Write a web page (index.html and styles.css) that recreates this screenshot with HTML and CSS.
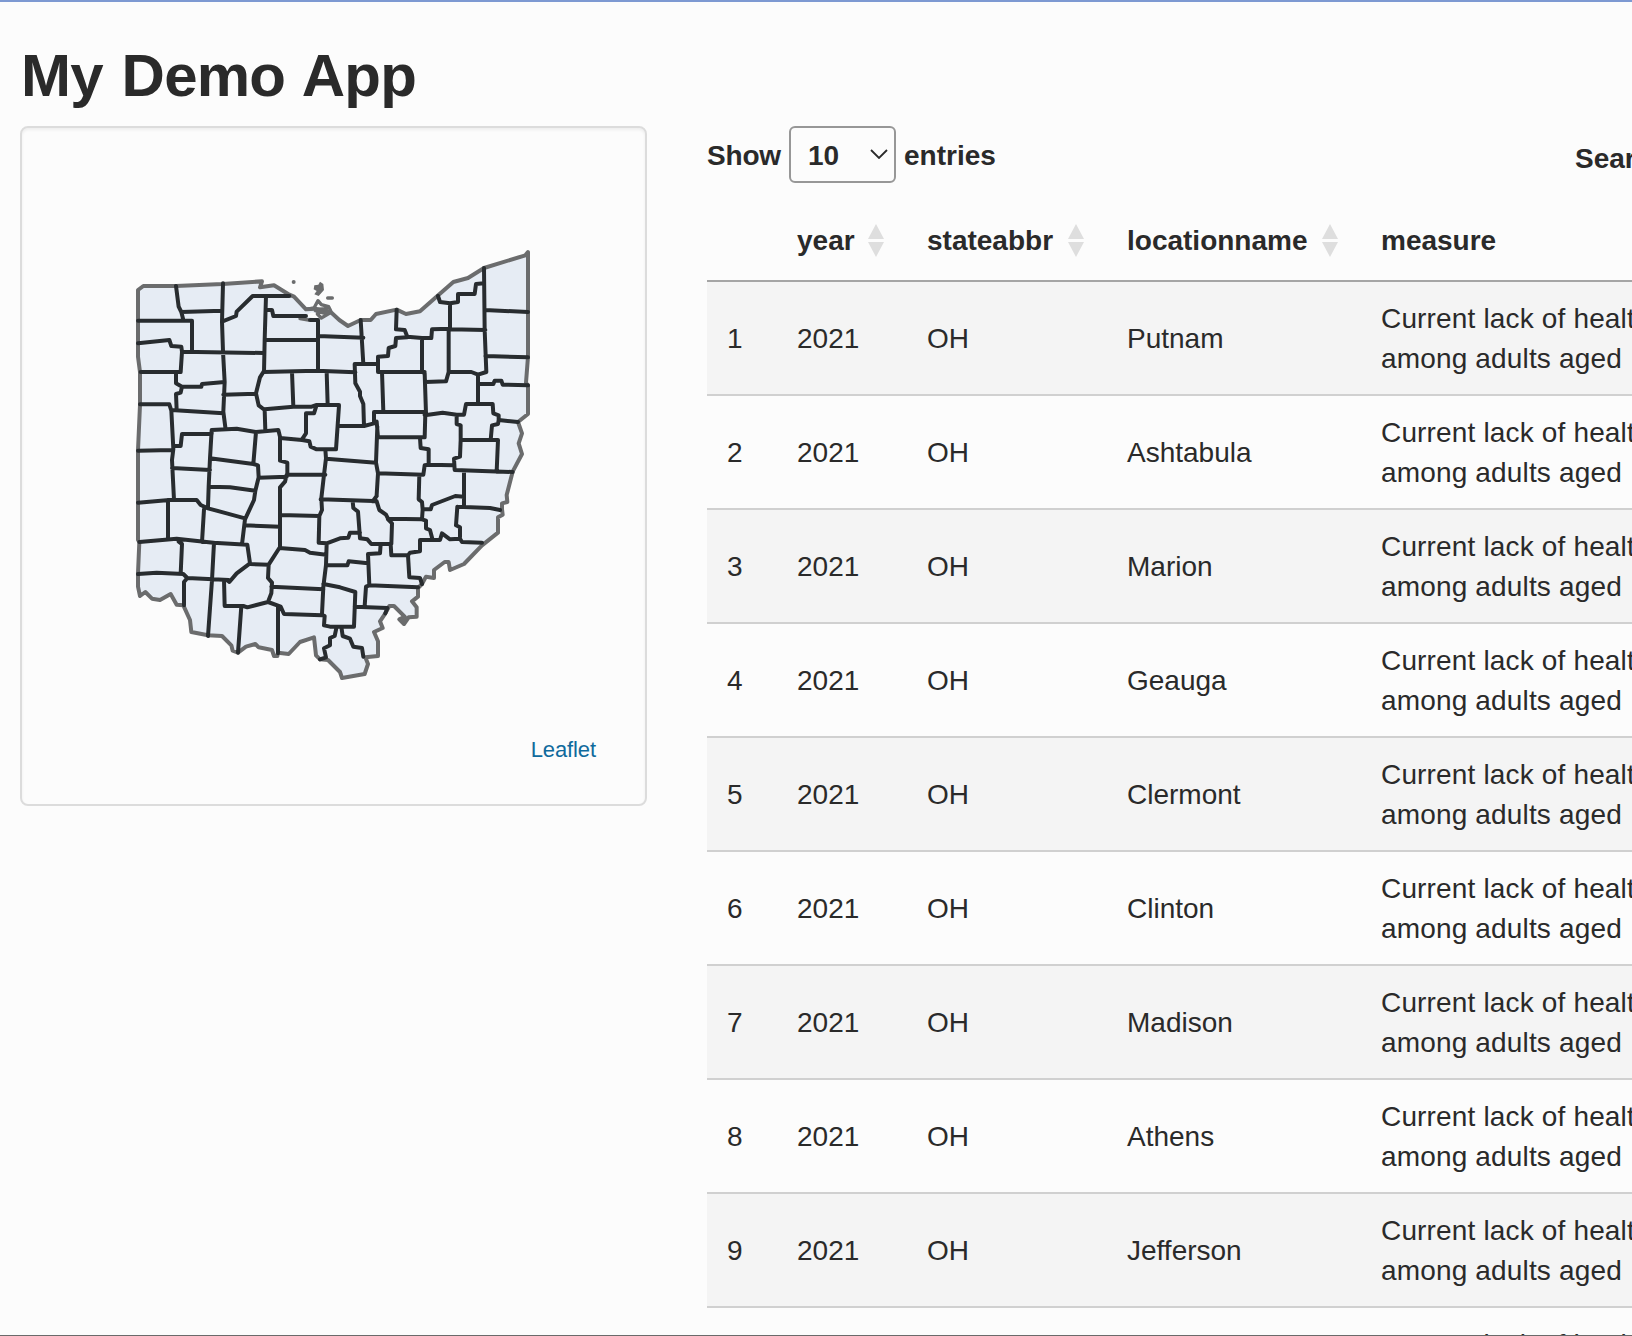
FILE: index.html
```
<!DOCTYPE html>
<html lang="en">
<head>
<meta charset="utf-8">
<title>My Demo App</title>
<link rel="stylesheet" href="styles.css">
</head>
<body>
<div class="app">
  <h2 class="title">My Demo App</h2>
  <div class="layout">
    <aside class="well">
      <svg class="map" viewBox="0 0 1230 1320" role="img" aria-label="Ohio counties">
        <path class="state" d="M24 150L40 138H138L278 132L396 124L390 142L432 136L478 164L492 170L528 208L556 206L590 214L602 216L628 240L654 258L692 240H722L738 222L800 209L828 222L870 214L922 168L970 126L1014 114L1062 84L1186 46L1194 36V350L1188 428L1194 436V522L1164 546L1176 580L1166 610L1176 642L1148 695L1130 765L1132 786L1116 790V808L1118 824L1104 832V878L1056 916L1002 972L960 990L956 966H944L912 990V1014L888 1010L876 1032L864 1044V1070L846 1084L860 1102V1130L836 1132L822 1152L808 1138L824 1130L792 1098H778L766 1120L750 1144L758 1164L732 1176L744 1204V1248L706 1252L714 1272L704 1302L636 1314L630 1296L594 1260L570 1258L558 1246L552 1192L510 1206L476 1242L444 1238L442 1248H432L426 1230L386 1222L376 1212L348 1220L324 1238L308 1232L304 1216L276 1188L234 1186L184 1176L180 1140L160 1096L140 1094L122 1062L90 1080L66 1076L46 1056L30 1068L24 1040V1000L28 906L24 900V630L30 495V396L24 350Z"/>
        <path class="bay" d="M524 228L545 217L566 222L590 220L570 230L560 236L540 232Z"/>
        <path class="shore" d="M528 208L552 204L564 182L574 194L596 200L602 212L584 220L556 212M510 236L536 240M562 222L574 234L602 218M556 208L590 206"/>
        <g class="island">
          <circle cx="491" cy="126" r="6"/>
          <path d="M570 125L580 132L582 150L566 168L553 163L560 153L551 148L553 136L565 134Z"/>
          <rect x="588" y="169" width="24" height="10" rx="5"/>
          <path d="M806 1138L822 1126L838 1134L822 1154Z"/>
        </g>
        <path class="county" d="M138 138L146 200L154 216L160 240M154 216L276 212M279 130L276 245L279 335L284 426L280 515L286 562M24 242H186V335M24 310L118 300L124 318L154 320L156 335L152 396H32M156 335L400 339M276 245L318 228L320 215L368 168H478M408 168L404 300L402 396M408 210H426L430 228H528M404 300H564M540 240H564V393M564 288L700 293M400 396L560 392L676 397M400 396L390 412L378 460L386 496L404 510L406 572M486 396L490 500M590 396L593 495M138 396V430L156 440H214L216 432L284 426M156 440L152 458L138 462L140 510M30 493H118L124 512L130 627L126 660L132 780M124 510L280 520M280 464L378 461M404 508L490 500H545L560 495H627M560 495L552 520H528V580L516 598M450 594L516 600L538 604L542 620L560 628H618L622 570L627 497M245 570L320 566L378 576L445 570L450 590V662L472 668V704M245 570V582H156L152 618H130M24 632L126 630M378 576L370 672M245 570L240 655L236 740L234 800M126 684L240 690M240 655L370 672L384 676L386 712L376 752L372 780L345 838L336 913M386 713L470 710M474 704H586M470 704L465 725L450 742V920M236 740L300 742L376 752M24 788L118 780H200L212 795L234 805L290 820L345 835M222 808L216 906M114 780V896M345 856L450 860M450 825L568 828M586 628L588 655L582 704L574 775L576 810L568 828L566 908M588 656L738 668M572 778L730 783L740 768M692 240L700 372M740 372H674L676 430L690 455V468L700 492L702 558M800 209L798 268L824 270L832 290L876 294H904L906 268L960 266M832 292L798 294L796 318L776 324L774 348L744 350V396H884M756 396L760 515M876 294V396L884 400L888 520M886 426L948 424L956 396V266M960 190V268L1066 270M924 168L930 186L960 190L984 186V162H1034L1038 132L1062 130M1062 84L1064 270L1069 396L1044 404L1024 396H956M1064 210L1194 216M1066 348L1194 352M1044 404V492M1044 432H1090L1094 422H1114L1118 434L1194 436M624 558H702L732 550V516H884V526L938 518L980 524H1002L1008 492H1088L1090 520L1106 526V540L1164 546M1106 540L1104 552L1086 556L1082 600M980 524V552L992 556V600H1104L1100 695M992 600L990 650L972 656L974 690L1148 696M732 550L740 545L744 592H884L886 520M870 594L872 624L896 628V674L970 676M896 674L884 676L880 704L744 700M742 560L738 668L744 700L740 765M868 704L866 778L876 786L878 808L876 838M878 808H902L906 795L976 768L1002 770M1002 695V798M982 800L1080 804L1110 810M982 800L978 856L990 862V892M740 784L748 810L768 824L774 836L876 838L888 842M668 784L670 804L684 815L690 895M740 768L728 784L740 784M566 908L590 910L630 895L655 893L660 878H690M690 895L712 898L724 912H784L786 850L774 838M782 912L784 946H834L840 938L870 934V900H908L900 870L888 865V842M908 900H930L936 880L960 898L990 896L996 906L1056 908M834 946L838 1012L870 1014L876 1032M752 912L750 940L714 942L718 1036M590 910L588 975L580 1040L576 1122M588 976H652L656 964L714 970M718 1036L864 1042M718 1036L708 1040L704 1098M674 1100L772 1104L766 1120M580 1032L630 1042L676 1056L672 1160H600L582 1156L584 1128L576 1124M28 906L140 896L250 908L352 914L360 970L320 1000L298 1026L290 1020M146 905L156 912L152 1002M24 1002L80 998L160 1002L172 1014L296 1020M172 1014L162 1026V1096M252 908L246 1020L234 1188M282 1020L284 1098H340L352 1102L414 1086L424 1060L426 1028L414 1014L416 974L360 972M416 974L448 924L525 930L540 938L588 944M424 1040L580 1048M414 1086L452 1100L462 1122L576 1126M444 1100V1240M334 1098L324 1238M620 1160L614 1188L600 1194V1216L582 1225L588 1252L570 1258M634 1160L638 1188L660 1196L670 1220L696 1224L700 1250"/>
      </svg>
      <a class="credit">Leaflet</a>
    </aside>
    <main class="data">
      <div class="controls">
        <div class="length">
          <span>Show</span>
          <span class="select">10<svg class="chevron" viewBox="0 0 18 10"><path d="M1 1L9 9L17 1"/></svg></span>
          <span>entries</span>
        </div>
        <div class="search">Search:</div>
      </div>
      <table class="table">
        <colgroup><col class="c-num"><col class="c-year"><col class="c-state"><col class="c-loc"><col class="c-measure"></colgroup>
        <thead>
          <tr>
            <th></th>
            <th><div class="head">year<svg class="sort" viewBox="0 0 16 33"><path d="M8 0L16 15H0ZM0 18H16L8 33Z"/></svg></div></th>
            <th><div class="head">stateabbr<svg class="sort" viewBox="0 0 16 33"><path d="M8 0L16 15H0ZM0 18H16L8 33Z"/></svg></div></th>
            <th><div class="head">locationname<svg class="sort" viewBox="0 0 16 33"><path d="M8 0L16 15H0ZM0 18H16L8 33Z"/></svg></div></th>
            <th><div class="head">measure</div></th>
          </tr>
        </thead>
        <tbody>
          <tr><td>1</td><td>2021</td><td>OH</td><td>Putnam</td><td>Current lack of health insurance<br>among adults aged</td></tr>
          <tr><td>2</td><td>2021</td><td>OH</td><td>Ashtabula</td><td>Current lack of health insurance<br>among adults aged</td></tr>
          <tr><td>3</td><td>2021</td><td>OH</td><td>Marion</td><td>Current lack of health insurance<br>among adults aged</td></tr>
          <tr><td>4</td><td>2021</td><td>OH</td><td>Geauga</td><td>Current lack of health insurance<br>among adults aged</td></tr>
          <tr><td>5</td><td>2021</td><td>OH</td><td>Clermont</td><td>Current lack of health insurance<br>among adults aged</td></tr>
          <tr><td>6</td><td>2021</td><td>OH</td><td>Clinton</td><td>Current lack of health insurance<br>among adults aged</td></tr>
          <tr><td>7</td><td>2021</td><td>OH</td><td>Madison</td><td>Current lack of health insurance<br>among adults aged</td></tr>
          <tr><td>8</td><td>2021</td><td>OH</td><td>Athens</td><td>Current lack of health insurance<br>among adults aged</td></tr>
          <tr><td>9</td><td>2021</td><td>OH</td><td>Jefferson</td><td>Current lack of health insurance<br>among adults aged</td></tr>
          <tr><td></td><td></td><td></td><td></td><td>Current lack of health insurance<br>among adults aged</td></tr>
        </tbody>
      </table>
    </main>
  </div>
</div>
</body>
</html>
```
FILE: styles.css
```
* { box-sizing: border-box; }

body {
  margin: 0;
  background: #fcfcfc;
  color: #2a2a2a;
  font: 28px/40px "Liberation Sans", Arial, sans-serif;
}

.app {
  height: 1336px;
  overflow: hidden;
  padding: 41px 0 0 20px;
  border-top: 2px solid #7d99d2;
  border-bottom: 1px solid #6a6a6a;
}

.title {
  margin: 0 0 17px;
  padding-left: 1px;
  font-size: 60px;
  line-height: 66px;
  font-weight: 700;
  letter-spacing: -0.8px;
  word-spacing: 3px;
}

.layout {
  display: flex;
  align-items: flex-start;
  gap: 60px;
}

.well {
  flex: none;
  display: flex;
  flex-direction: column;
  width: 627px;
  height: 680px;
  padding: 112px 49px 0 108px;
  border: 2px solid #dcdcdc;
  border-radius: 8px;
  box-shadow: inset 0 2px 3px rgba(0, 0, 0, 0.06);
}

.map {
  flex: none;
  width: 410px;
  height: 440px;
}

.state {
  fill: #e6ecf4;
  stroke: #6b6c6d;
  stroke-width: 12;
  stroke-linejoin: round;
}

.bay { fill: #fcfcfc; }

.shore {
  fill: none;
  stroke: #6b6c6d;
  stroke-width: 10;
  stroke-linejoin: round;
  stroke-linecap: round;
}

.island { fill: #6b6c6d; }

.county {
  fill: none;
  stroke: #282c2f;
  stroke-width: 12;
  stroke-linejoin: round;
  stroke-linecap: round;
}

.credit {
  align-self: flex-end;
  margin-top: 55px;
  color: #0f6a9c;
  font-size: 22px;
  line-height: 30px;
  letter-spacing: -0.1px;
}

.data {
  flex: none;
  width: 1200px;
}

.controls {
  display: flex;
  height: 94px;
  font-weight: 700;
}

.length {
  flex: none;
  display: flex;
  align-items: flex-start;
  width: 868px;
  line-height: 60px;
}

.length span:first-child {
  width: 82px;
  letter-spacing: -0.2px;
}

.select {
  display: flex;
  align-items: center;
  justify-content: space-between;
  width: 107px;
  height: 57px;
  margin-right: 8px;
  padding: 2px 6px 0 17px;
  border: 2px solid #979797;
  border-radius: 6px;
}

.chevron {
  width: 18px;
  height: 10px;
  margin-bottom: 3px;
}

.chevron path {
  fill: none;
  stroke: #2a2a2a;
  stroke-width: 1.8;
}

.search { padding-top: 13px; }

.table {
  width: 1200px;
  table-layout: fixed;
  border-collapse: separate;
  border-spacing: 0;
}

.c-num { width: 70px; }
.c-year { width: 130px; }
.c-state { width: 200px; }
.c-loc { width: 254px; }

.table th,
.table td {
  padding: 17px 20px 15px;
  text-align: left;
  vertical-align: middle;
  white-space: nowrap;
  border-bottom: 2px solid #d0d0d0;
}

.table th {
  height: 62px;
  padding: 0 20px 18px;
  border-bottom-color: #a5a5a5;
}

.table td { height: 114px; }

.table td:last-child { letter-spacing: 0.16px; }

.table tbody tr:nth-child(odd) { background: #f4f4f4; }

.head {
  display: flex;
  align-items: center;
  justify-content: space-between;
  height: 40px;
  margin-right: 3px;
}

.sort {
  width: 16px;
  height: 33px;
  margin-bottom: 2px;
  fill: #dedede;
}
```
